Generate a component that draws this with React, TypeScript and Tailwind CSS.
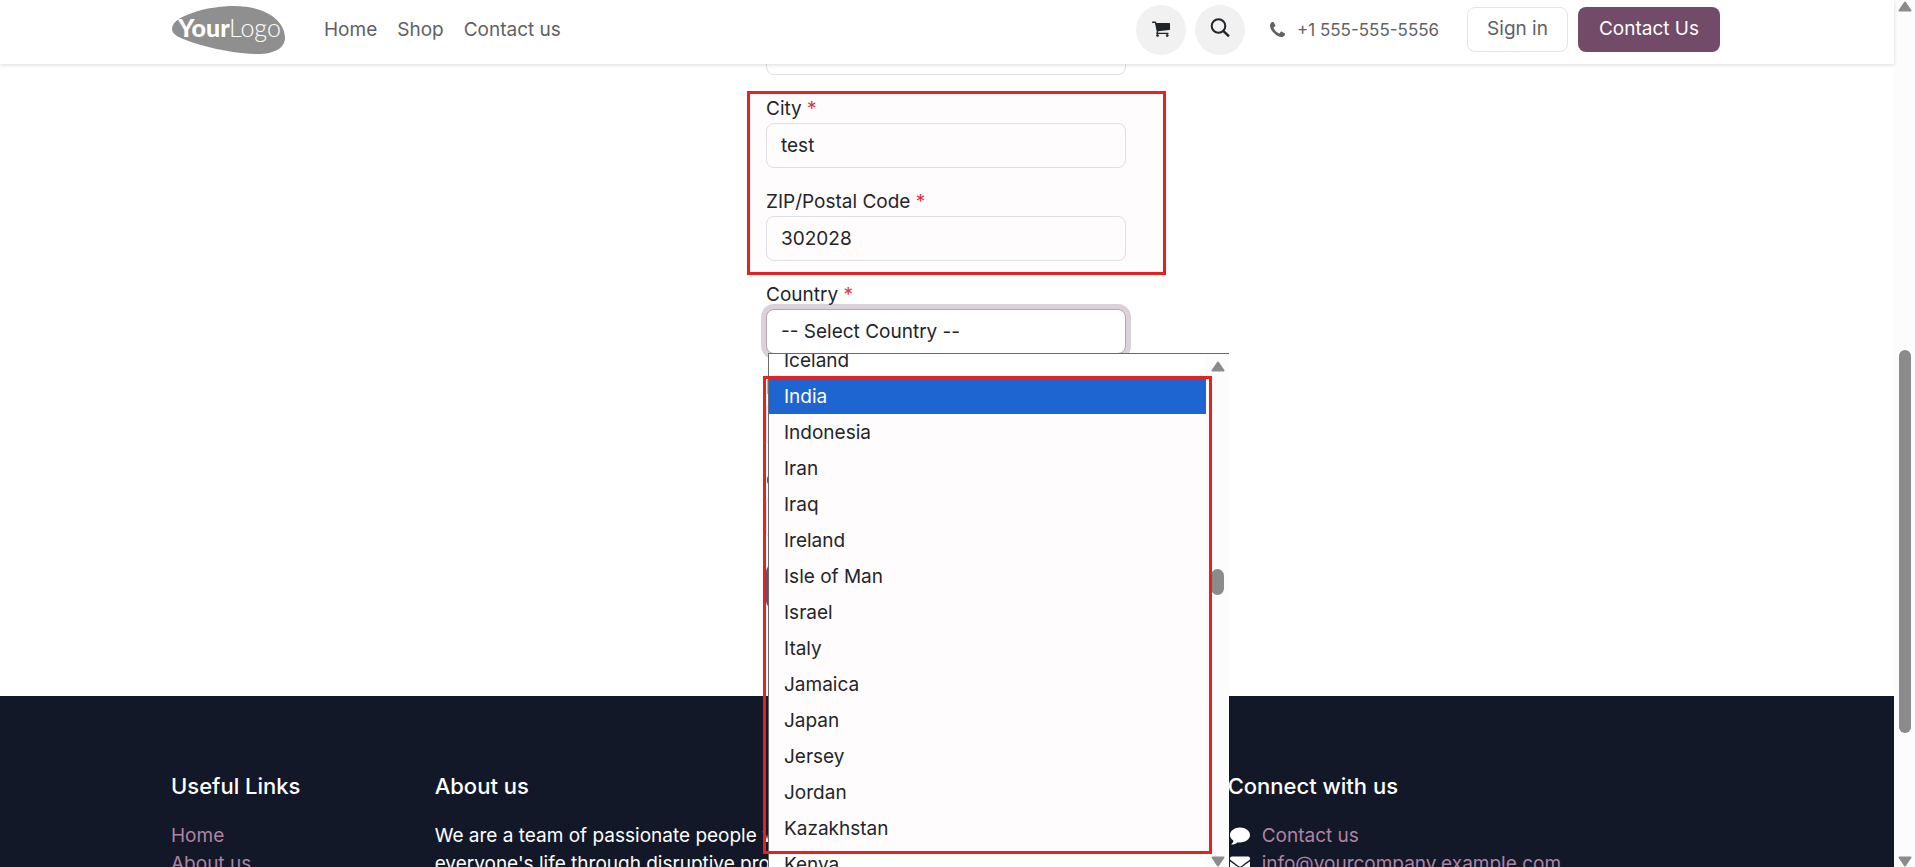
import { useState } from "react";
import { FaEnvelope } from "react-icons/fa";

const navLinks = ["Home", "Shop", "Contact us"];
const usefulLinks = ["Home", "About us", "Products", "Services", "Legal"];

const countries = [
  "Iceland",
  "India",
  "Indonesia",
  "Iran",
  "Iraq",
  "Ireland",
  "Isle of Man",
  "Israel",
  "Italy",
  "Jamaica",
  "Japan",
  "Jersey",
  "Jordan",
  "Kazakhstan",
  "Kenya",
];

const inputClass =
  "block h-[45px] w-full rounded-lg border border-[#dee2e6] bg-transparent px-[14px] text-[19px] text-[#212529] outline-none";

function Logo() {
  return (
    <svg width="114" height="48" viewBox="0 0 114 48" role="img" aria-label="Your Logo">
      <path
        d="M0 23 C0 15 11 10 20 7 C34 2 49 0 62 0 C92 0 113 14 113 32 C113 42 102 48 86 48 C68 48 40 43 22 37 C8 32 0 29 0 23 Z"
        fill="#8f8f8f"
      />
      <text x="6" y="31" fontFamily="Lato" fontSize="25" fontWeight="900" fill="#fff">
        Your
      </text>
      <text x="57" y="31" fontFamily="Lato" fontSize="25" fontWeight="300" fill="#fff">
        Logo
      </text>
    </svg>
  );
}

function CartIcon() {
  return (
    <svg width="18" height="17" viewBox="0 0 1664 1536" fill="currentColor" aria-hidden="true">
      <path d="M640 1408q0 52-38 90t-90 38-90-38-38-90 38-90 90-38 90 38 38 90zm896 0q0 52-38 90t-90 38-90-38-38-90 38-90 90-38 90 38 38 90zm128-1088v512q0 24-16.5 42.5t-40.5 21.5l-1044 122q13 60 13 70 0 16-24 64h920q26 0 45 19t19 45-19 45-45 19h-1024q-26 0-45-19t-19-45q0-11 8-31.5t16-36 21.5-40 15.5-29.5l-177-823h-204q-26 0-45-19t-19-45 19-45 45-19h256q16 0 28.5 6.5t19.5 15.5 13 24.5 8 26 5.5 29.5 4.5 26h1201q26 0 45 19t19 45z" />
    </svg>
  );
}

function SearchIcon() {
  return (
    <svg width="20" height="20" viewBox="0 0 20 20" fill="none" stroke="#212529" strokeWidth="2">
      <circle cx="8.5" cy="8" r="6.8" />
      <path d="M13.2 12.8 L19 18.4" strokeWidth="2.4" />
    </svg>
  );
}

function PhoneIcon() {
  return (
    <svg width="15" height="15" viewBox="0 0 1408 1408" fill="currentColor" aria-hidden="true">
      <path d="M1408 1112q0 27-10 70.500t-21 68.500q-21 50-122 106-94 51-186 51-27 0-53-3.500t-57.500-12.500-47-14.500-55.500-20.500-49-18q-98-35-175-83-127-79-264-216t-216-264q-48-77-83-175-3-9-18-49t-20.500-55.500-14.500-47-12.500-57.500-3.500-53q0-92 51-186 56-101 106-122 25-11 68.500-21t70.500-10q14 0 21 3 18 6 53 76 11 19 30 54t35 63.500 31 53.500q3 4 17.500 25t21.500 35.500 7 28.500q0 20-28.500 50t-62 55-62 53-28.500 46q0 9 5 22.500t8.500 20.500 14 24 11.500 19q76 137 174 235t235 174q2 1 19 11.500t24 14 20.500 8.500 22.500 5q18 0 46-28.500t53-62 55-62 50-28.500q14 0 28.500 7t35.500 21.500 25 17.500q25 15 53.500 31t63.500 35 54 30q70 35 76 53 3 7 3 21z" />
    </svg>
  );
}

function CommentIcon() {
  return (
    <svg width="20" height="18" viewBox="0 0 20 18" fill="currentColor" aria-hidden="true">
      <path d="M10 0.500 C15.500 0.500 20 3.800 20 8 C20 12.200 15.500 15.400 10 15.400 C9.200 15.400 8.400 15.300 7.600 15.200 C6 16.600 4 17.400 1.800 17.600 C1.300 17.600 1.200 17.200 1.500 16.900 C2.600 16 3.300 15 3.500 13.800 C1.300 12.400 0 10.300 0 8 C0 3.800 4.500 0.500 10 0.500 Z" />
    </svg>
  );
}

function Arrow({ down = false }: { down?: boolean }) {
  return (
    <svg width="14" height="11" viewBox="0 0 14 11" className={down ? "rotate-180" : ""} aria-hidden="true">
      <path d="M7 1.500 L12.500 9.500 H1.500 Z" fill="#8b8b8b" stroke="#8b8b8b" strokeWidth="2" strokeLinejoin="round" />
    </svg>
  );
}

function Field({ id, label, value }: { id: string; label: string; value?: string }) {
  return (
    <div>
      <label htmlFor={id} className="block h-7 text-[19px] leading-[27px]">
        {label} <span className="text-[#dc3545]">*</span>
      </label>
      <input id={id} type="text" defaultValue={value} className={inputClass} />
    </div>
  );
}

function Highlight({ className }: { className: string }) {
  return (
    <div
      className={
        "pointer-events-none absolute border-[3px] border-[#e82020] bg-[#ff0040]/[0.01] " + className
      }
    />
  );
}

function Header() {
  return (
    <header className="relative z-20 h-16 bg-white shadow-[0_1px_4px_rgba(0,0,0,0.15)]">
      <div className="mx-auto flex h-full max-w-[1552px] items-center justify-between pr-[3px] pb-[5px] pl-px">
        <div className="flex items-center gap-[38px]">
          <a href="#">
            <Logo />
          </a>
          <nav className="flex gap-5 pt-0.5 text-[19px] text-[#5f6163]">
            {navLinks.map((link) => (
              <a key={link} href="#">
                {link}
              </a>
            ))}
          </nav>
        </div>
        <div className="flex items-center text-[19px] text-[#5f6163]">
          <button
            aria-label="Cart"
            className="flex h-[50px] w-[50px] items-center justify-center rounded-full bg-[#f1f1f1] pb-0.5 text-[#212529]"
          >
            <CartIcon />
          </button>
          <button
            aria-label="Search"
            className="ml-[9px] flex h-[50px] w-[50px] items-center justify-center rounded-full bg-[#f1f1f1] pb-1"
          >
            <SearchIcon />
          </button>
          <a href="#" className="ml-[25px] flex items-center text-[17px]">
            <PhoneIcon />
            <span className="ml-3 pt-0.5">+1 555-555-5556</span>
          </a>
          <a
            href="#"
            className="ml-7 flex h-[45px] items-center rounded-lg border border-[#e3e4e6] px-[19px]"
          >
            Sign in
          </a>
          <a href="#" className="ml-[10px] flex h-[45px] items-center rounded-lg bg-[#714b67] px-[21px] text-white">
            Contact Us
          </a>
        </div>
      </div>
    </header>
  );
}

function CountryList({ value, onPick }: { value: string; onPick: (country: string) => void }) {
  return (
    <div className="absolute top-[72px] left-0.5 z-10 flex h-[514px] w-[461px] border-t border-l border-[#6b6b6b] bg-white">
      <div className="flex-1 overflow-hidden">
        <ul role="listbox" aria-label="Country" className="-mt-3">
          {countries.map((country) => (
            <li
              key={country}
              role="option"
              aria-selected={country === value}
              onClick={() => onPick(country)}
              className={
                "h-9 pl-[15px] text-[19px] leading-[38px] " +
                (country === value ? "bg-[#1c66d2] text-white" : "")
              }
            >
              {country}
            </li>
          ))}
        </ul>
      </div>
      <div className="flex w-[23px] flex-col items-center bg-[#fcfcfc] pt-[7px]">
        <Arrow />
        <div className="mt-[197px] mb-auto h-[26px] w-[13px] rounded-full bg-[#8b8b8b]" />
        <Arrow down />
      </div>
      <Highlight className="top-[22px] -left-[6px] h-[478px] w-[449px]" />
    </div>
  );
}

function Footer() {
  return (
    <footer className="bg-[#121827] pt-[76px] text-[19px] leading-7 text-white">
      <div className="mx-auto grid max-w-[1552px] grid-cols-12 gap-x-[30px]">
        <div className="col-span-2">
          <h5 className="mb-[22px] text-[22px] leading-7 font-medium">Useful Links</h5>
          <ul className="text-[#b083a4]">
            {usefulLinks.map((link) => (
              <li key={link}>
                <a href="#">{link}</a>
              </li>
            ))}
          </ul>
        </div>
        <div className="col-span-5">
          <h5 className="mb-[22px] text-[22px] leading-7 font-medium">About us</h5>
          <p>
            We are a team of passionate people whose goal is to improve everyone's life through disruptive
            products.
          </p>
        </div>
        <div className="col-span-4 col-start-9 pl-0.5">
          <h5 className="mb-[22px] text-[22px] leading-7 font-medium">Connect with us</h5>
          <ul className="pl-0.5">
            <li className="flex items-center gap-3">
              <CommentIcon />
              <a href="#" className="text-[#b083a4]">
                Contact us
              </a>
            </li>
            <li className="flex items-center gap-3">
              <FaEnvelope size={20} />
              <a href="#" className="text-[#b083a4]">
                info@yourcompany.example.com
              </a>
            </li>
          </ul>
        </div>
      </div>
    </footer>
  );
}

export default function App() {
  const [country, setCountry] = useState("India");

  return (
    <div className="flex h-screen overflow-hidden bg-white font-['Inter',sans-serif] text-[#212529]">
      <div className="min-w-0 flex-1">
        <Header />
        <main className="pr-0.5 pb-[87px]">
          <form className="mx-auto flex w-[360px] flex-col gap-5" onSubmit={(e) => e.preventDefault()}>
            <input aria-label="Street" type="text" className={inputClass + " -mt-[34px]"} />
            <div className="relative flex flex-col gap-5">
              <Field id="city" label="City" value="test" />
              <Field id="zip" label="ZIP/Postal Code" value="302028" />
              <Highlight className="-top-1 -right-10 -bottom-[14px] -left-[19px]" />
            </div>
            <div className="relative">
              <label htmlFor="country" className="block h-7 text-[19px] leading-[27px]">
                Country <span className="text-[#dc3545]">*</span>
              </label>
              <select
                id="country"
                className="block h-[45px] w-full appearance-none rounded-lg border border-[#b8a5b3] bg-white px-[14px] pt-0.5 text-[19px] ring-[5px] ring-[#dbd2d9] outline-none"
              >
                <option>-- Select Country --</option>
              </select>
              <CountryList value={country} onPick={setCountry} />
            </div>
            <Field id="phone" label="Phone" />
            <Field id="company" label="Company" />
            <button className="mt-1 h-[45px] w-full rounded-lg bg-[#714b67] text-[19px] text-white">Save</button>
          </form>
        </main>
        <Footer />
      </div>
      <div className="flex w-[21px] flex-col items-center bg-[#fcfcfc] pt-px">
        <Arrow />
        <div className="mt-[338px] mb-auto h-[383px] w-3 rounded-full bg-[#8b8b8b]" />
        <Arrow down />
      </div>
    </div>
  );
}
